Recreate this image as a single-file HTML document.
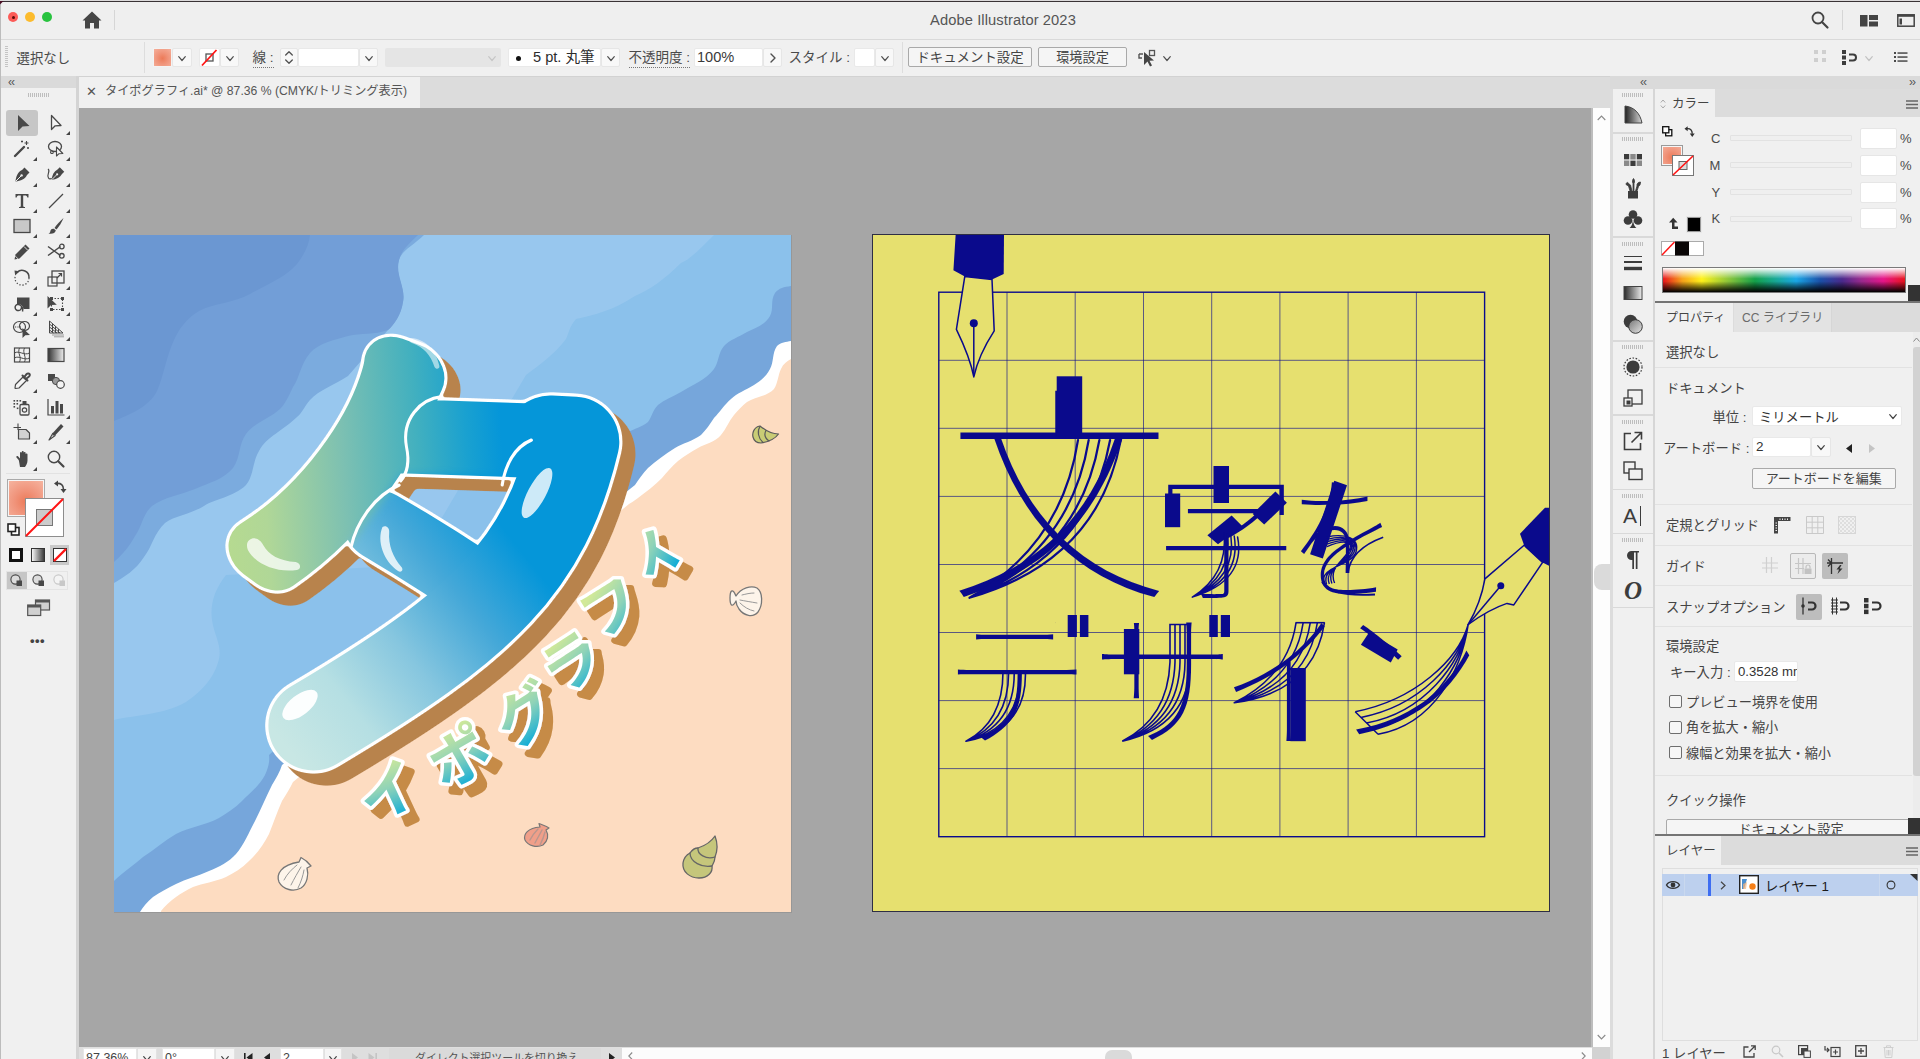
<!DOCTYPE html>
<html lang="ja">
<head>
<meta charset="utf-8">
<title>Adobe Illustrator 2023</title>
<style>
*{box-sizing:border-box;margin:0;padding:0}
html,body{width:1920px;height:1059px;overflow:hidden;background:#f0f0f0}
body{font-family:"Liberation Sans","Noto Sans CJK JP",sans-serif;font-size:12px;color:#464646;position:relative}
.abs{position:absolute}
#app{position:absolute;left:0;top:0;width:1920px;height:1059px;overflow:hidden;background:#f0f0f0}
.t{position:absolute;white-space:nowrap;line-height:1}
svg{position:absolute;overflow:visible}
/* title bar */
#titlebar{left:0;top:0;width:1920px;height:39px;background:#efefef}
#topline{left:0;top:0;width:1920px;height:2px;background:linear-gradient(#dcdadb 0 1px,#3a3336 1px 2px)}
#ctrlbar{left:0;top:39px;width:1920px;height:37px;background:#f0f0f0;border-top:1px solid #d9d9d9}
#tabbar{left:0;top:76px;width:1920px;height:32px;background:#dcdcdc;border-top:1px solid #d2d2d2}
#doctab{left:79px;top:77px;width:341px;height:31px;background:#f0f0f0}
#canvas{left:79px;top:108px;width:1513px;height:939px;background:#a6a6a6;overflow:hidden}
#tools{left:0;top:76px;width:79px;height:983px;background:#f0f0f0;border-right:3px solid #d4d4d4}
#toolshead{left:0;top:76px;width:76px;height:12px;background:#dadada}
#vscroll{left:1592px;top:108px;width:18px;height:939px;background:#fdfdfd}
#statusbar{left:79px;top:1047px;width:1531px;height:12px;background:#dedede}
#dock{left:1610px;top:76px;width:310px;height:983px;background:#dcdcdc}
#dockstrip{left:1613px;top:89px;width:40px;height:970px;background:#f0f0f0}
.fld{position:absolute;background:#fff;border:1px solid #e9e9e9;border-radius:2px}
.btn{position:absolute;background:#f8f8f8;border:1px solid #e6e6e6;border-radius:2px}
.pbtn{position:absolute;background:#f5f5f5;border:1px solid #a9a9a9;border-radius:2px;text-align:center}
.sep{position:absolute;background:#dcdcdc}
.panel{position:absolute;background:#f0f0f0}
.cb{position:absolute;width:13px;height:13px;border:1px solid #6e6e6e;border-radius:2px;background:#f6f6f6}
.grip{position:absolute;height:4px;background:repeating-linear-gradient(90deg,#bdbdbd 0 1px,transparent 1px 2px)}
</style>
</head>
<body>
<div id="app">
<!-- TITLEBAR -->
<div id="titlebar" class="abs"></div>
<div id="topline" class="abs"></div>
<div class="abs" style="left:7.8px;top:11.8px;width:10.4px;height:10.4px;border-radius:50%;background:#fc5b57"></div>
<div class="abs" style="left:11.5px;top:15.5px;width:3px;height:3px;border-radius:50%;background:#5a0b08"></div>
<div class="abs" style="left:25px;top:11.8px;width:10.4px;height:10.4px;border-radius:50%;background:#fcbb2d"></div>
<div class="abs" style="left:42px;top:11.8px;width:10.4px;height:10.4px;border-radius:50%;background:#28c33f"></div>
<svg style="left:82px;top:11px" width="20" height="18" viewBox="0 0 20 18"><path d="M10 0.5 L0.5 9.5 H3 V17.5 H8 V12 H12 V17.5 H17 V9.5 H19.5 Z" fill="#464646"/></svg>
<div class="sep" style="left:114px;top:10px;width:1px;height:20px;background:#d6d6d6"></div>
<div class="t" style="left:930px;top:13.2px;font-size:14.7px;color:#555;letter-spacing:0.1px">Adobe Illustrator 2023</div>
<svg style="left:1811px;top:11px" width="18" height="18" viewBox="0 0 18 18"><circle cx="7" cy="7" r="5.5" fill="none" stroke="#444" stroke-width="1.8"/><path d="M11 11 L16.5 16.5" stroke="#444" stroke-width="2.2" stroke-linecap="round"/></svg>
<div class="sep" style="left:1842px;top:10px;width:1px;height:20px;background:#d6d6d6"></div>
<svg style="left:1860px;top:15px" width="18" height="12" viewBox="0 0 18 12"><g fill="#444"><rect x="0" y="0" width="7.5" height="11.5"/><rect x="9" y="0" width="9" height="5"/><rect x="9" y="6.5" width="9" height="5"/></g></svg>
<svg style="left:1897px;top:14px" width="18" height="13" viewBox="0 0 18 13"><rect x="0.8" y="0.8" width="16.4" height="11.4" fill="none" stroke="#444" stroke-width="1.5"/><rect x="0.8" y="0.8" width="16.4" height="2" fill="#444"/><rect x="2.5" y="4.5" width="2.5" height="6" fill="#444"/></svg>

<!-- CONTROL BAR -->
<div id="ctrlbar" class="abs"></div>
<div class="abs" style="left:5px;top:46px;width:3px;height:22px;background:repeating-linear-gradient(180deg,#c4c4c4 0 1px,transparent 1px 2px)"></div>
<div class="t" style="left:16.5px;top:51.5px;font-size:13.4px;color:#4a4a4a;">選択なし</div>
<div class="sep" style="left:144px;top:42px;width:1px;height:31px;background:#dddddd"></div>
<div class="abs" style="left:153px;top:48px;width:19px;height:19px;background:radial-gradient(circle at 50% 55%,#ec7a58 0%,#f0947a 45%,#f5b09b 100%);border:1px solid #f3f3f3"></div>
<div class="btn" style="left:172px;top:48px;width:20px;height:19px"></div><svg style="left:178.0px;top:55.8px" width="8" height="5" viewBox="0 0 8 5"><path d="M0.7 0.7 L4.0 4.5 L7.3 0.7" fill="none" stroke="#505050" stroke-width="1.2" stroke-linecap="round" stroke-linejoin="round"/></svg>
<div class="fld" style="left:199px;top:48px;width:21px;height:19px"></div>
<svg style="left:199px;top:48px" width="21" height="19" viewBox="0 0 21 19"><rect x="7" y="6" width="7" height="7" fill="none" stroke="#555" stroke-width="1.3"/><path d="M3 17.5 L17.5 2" stroke="#ff1414" stroke-width="1.8"/></svg>
<div class="btn" style="left:220px;top:48px;width:19px;height:19px"></div><svg style="left:225.5px;top:55.8px" width="8" height="5" viewBox="0 0 8 5"><path d="M0.7 0.7 L4.0 4.5 L7.3 0.7" fill="none" stroke="#505050" stroke-width="1.2" stroke-linecap="round" stroke-linejoin="round"/></svg>
<div class="t" style="left:252.5px;top:51px;font-size:13.5px;color:#4a4a4a;border-bottom:1px dotted #777;padding-bottom:2px">線 :</div>
<div class="btn" style="left:280px;top:48px;width:18px;height:19px"></div>
<svg style="left:285px;top:51px" width="8" height="13" viewBox="0 0 8 13"><path d="M0.7 4 L4 0.8 L7.3 4 M0.7 9 L4 12.2 L7.3 9" fill="none" stroke="#505050" stroke-width="1.3" stroke-linecap="round" stroke-linejoin="round"/></svg>
<div class="fld" style="left:298px;top:48px;width:61px;height:19px"></div>
<div class="btn" style="left:359px;top:48px;width:19px;height:19px"></div><svg style="left:364.5px;top:55.8px" width="8" height="5" viewBox="0 0 8 5"><path d="M0.7 0.7 L4.0 4.5 L7.3 0.7" fill="none" stroke="#505050" stroke-width="1.2" stroke-linecap="round" stroke-linejoin="round"/></svg>
<div class="abs" style="left:385px;top:48px;width:116px;height:19px;background:#e5e5e5;border-radius:2px"></div>
<svg style="left:488.0px;top:55.8px" width="8" height="5" viewBox="0 0 8 5"><path d="M0.7 0.7 L4.0 4.5 L7.3 0.7" fill="none" stroke="#c6c6c6" stroke-width="1.2" stroke-linecap="round" stroke-linejoin="round"/></svg>
<div class="fld" style="left:508px;top:48px;width:93px;height:19px"></div>
<div class="abs" style="left:516px;top:56px;width:5px;height:5px;border-radius:50%;background:#111"></div>
<div class="t" style="left:533px;top:49.8px;font-size:14.6px;color:#2c2c2c;">5 pt. 丸筆</div>
<div class="btn" style="left:601px;top:48px;width:19px;height:19px"></div><svg style="left:606.5px;top:55.8px" width="8" height="5" viewBox="0 0 8 5"><path d="M0.7 0.7 L4.0 4.5 L7.3 0.7" fill="none" stroke="#505050" stroke-width="1.2" stroke-linecap="round" stroke-linejoin="round"/></svg>
<div class="t" style="left:628.5px;top:51px;font-size:13.5px;color:#4a4a4a;border-bottom:1px dotted #777;padding-bottom:2px">不透明度 :</div>
<div class="fld" style="left:694px;top:48px;width:69px;height:19px"></div>
<div class="t" style="left:697px;top:49.8px;font-size:14.6px;color:#3a3a3a;">100%</div>
<div class="btn" style="left:763px;top:48px;width:19px;height:19px"></div>
<svg style="left:770px;top:53px" width="6" height="10" viewBox="0 0 6 10"><path d="M1 1 L5 5 L1 9" fill="none" stroke="#505050" stroke-width="1.4" stroke-linecap="round" stroke-linejoin="round"/></svg>
<div class="t" style="left:788.5px;top:51px;font-size:13.5px;color:#4a4a4a;">スタイル :</div>
<div class="fld" style="left:854px;top:48px;width:21px;height:19px"></div>
<div class="btn" style="left:875px;top:48px;width:19px;height:19px"></div><svg style="left:880.5px;top:55.8px" width="8" height="5" viewBox="0 0 8 5"><path d="M0.7 0.7 L4.0 4.5 L7.3 0.7" fill="none" stroke="#505050" stroke-width="1.2" stroke-linecap="round" stroke-linejoin="round"/></svg>
<div class="sep" style="left:902px;top:42px;width:1px;height:31px;background:#dddddd"></div>
<div class="pbtn" style="left:908px;top:47px;width:124px;height:20px;font-size:13.4px;line-height:19.5px;color:#444">ドキュメント設定</div>
<div class="pbtn" style="left:1038px;top:47px;width:89px;height:20px;font-size:13.2px;line-height:19.5px;color:#444">環境設定</div>
<svg style="left:1138px;top:48px" width="20" height="20" viewBox="0 0 20 20"><path d="M1 6 H5 M1 6 V10 H4" fill="none" stroke="#555" stroke-width="1.4"/><rect x="11.5" y="2.5" width="5" height="5" fill="none" stroke="#555" stroke-width="1.3"/><path d="M6 4 L6 17 L9.5 13.5 L12 18.5 L14 17.5 L11.5 12.8 L16 12.5 Z" fill="#444"/></svg>
<svg style="left:1163.0px;top:55.8px" width="8" height="5" viewBox="0 0 8 5"><path d="M0.7 0.7 L4.0 4.5 L7.3 0.7" fill="none" stroke="#505050" stroke-width="1.2" stroke-linecap="round" stroke-linejoin="round"/></svg>
<svg style="left:1814px;top:50px" width="13" height="13" viewBox="0 0 13 13"><g fill="#cfcfcf"><rect x="0" y="0" width="4" height="4"/><rect x="8" y="0" width="4" height="4"/><rect x="0" y="8" width="4" height="4"/><rect x="8" y="8" width="4" height="4"/></g></svg>
<svg style="left:1842px;top:50px" width="16" height="15" viewBox="0 0 16 15"><g fill="#3c3c3c"><rect x="0" y="0" width="4" height="4"/><rect x="0" y="5.5" width="4" height="4"/><rect x="0" y="11" width="4" height="4"/></g><path d="M7 4.5 H11 A3 3 0 0 1 11 10.5 H7" fill="none" stroke="#3c3c3c" stroke-width="2"/></svg>
<svg style="left:1865.0px;top:55.8px" width="8" height="5" viewBox="0 0 8 5"><path d="M0.7 0.7 L4.0 4.5 L7.3 0.7" fill="none" stroke="#c2c2c2" stroke-width="1.2" stroke-linecap="round" stroke-linejoin="round"/></svg>
<svg style="left:1894px;top:52px" width="14" height="11" viewBox="0 0 14 11"><g fill="#4a4a4a"><rect x="0" y="0" width="2" height="2"/><rect x="0" y="4" width="2" height="2"/><rect x="0" y="8" width="2" height="2"/><rect x="3.5" y="0.3" width="10" height="1.5"/><rect x="3.5" y="4.3" width="10" height="1.5"/><rect x="3.5" y="8.3" width="10" height="1.5"/></g></svg>

<!-- TAB BAR -->
<div id="tabbar" class="abs"></div>
<div id="doctab" class="abs"></div>
<div class="t" style="left:86px;top:85px;font-size:13px;color:#555">✕</div>
<div class="t" style="left:105px;top:85px;font-size:12.2px;color:#555">タイポグラフィ.ai* @ 87.36 % (CMYK/トリミング表示)</div>
<!-- CANVAS -->
<div id="canvas" class="abs">
<div class="abs abshadow" style="left:35px;top:127px;width:678px;height:678px;background:#979797"></div>
<div class="abs" style="left:793.3px;top:126.3px;width:677.6px;height:677.6px;background:#2e2e44"></div>
<svg style="left:35px;top:127px" width="677" height="677" viewBox="0 0 677 677">
<defs>
<clipPath id="abL"><rect x="0" y="0" width="677" height="677"/></clipPath>
<linearGradient id="gTa" gradientUnits="userSpaceOnUse" x1="-181.2" y1="-197.7" x2="144.9" y2="-230.6">
<stop offset="0" stop-color="#b6da90"/><stop offset="0.12" stop-color="#b0d797"/><stop offset="0.35" stop-color="#7cc0b2"/><stop offset="0.56" stop-color="#42b0bf"/><stop offset="0.7" stop-color="#1aa1d0"/><stop offset="0.8" stop-color="#0596d9"/><stop offset="1" stop-color="#0596d9"/>
</linearGradient>
<linearGradient id="gTa2" gradientUnits="userSpaceOnUse" x1="-116.2" y1="43.7" x2="101.7" y2="-131.8">
<stop offset="0" stop-color="#c8e7e4"/><stop offset="0.25" stop-color="#b5dfe3"/><stop offset="0.5" stop-color="#86c6df"/><stop offset="0.75" stop-color="#45a8d8"/><stop offset="1" stop-color="#0596d9"/>
</linearGradient>
<linearGradient id="gSm" gradientUnits="objectBoundingBox" x1="0" y1="0" x2="0.6" y2="1">
<stop offset="0" stop-color="#c9e59a"/><stop offset="0.5" stop-color="#7fd0c0"/><stop offset="1" stop-color="#19b0d6"/>
</linearGradient>
</defs>
<g clip-path="url(#abL)">
<rect width="677" height="677" fill="#8bc1eb"/>
<!-- lighter central patch -->
<path d="M304 0 L600 0 C585 15 575 25 567 28 C550 45 535 55 521 61 C500 75 480 80 462 84 C455 92 455 98 452 104 C440 120 425 130 412 140 L300 330 L112 340 C100 355 96 370 98 385 C100 400 108 410 105 424 C100 445 85 458 72 467 C50 480 20 480 0 485 L0 0 Z" fill="#98c7ee"/>
<!-- band 3 -->
<path d="M0 0 H310 C300 10 288 15 285 25 C280 40 292 52 289 67 C287 80 280 90 274 95 L234 141 C220 150 205 155 196 165 C190 172 188 178 183 182 C170 195 152 202 145 216 C138 228 140 240 132 250 C120 262 100 264 90 271 C75 280 62 280 51 288 C40 298 38 312 30 322 C22 335 10 342 0 348 Z" fill="#7babde"/>
<!-- band 2 -->
<path d="M0 0 H304 C296 8 288 14 285 25 C281 40 292 52 289 67 C287 80 280 90 274 95 C260 100 247 98 234 101 C220 105 205 108 196 118 C186 130 186 142 179 152 C175 160 172 168 166 174 C155 184 140 188 132 199 C124 210 127 222 119 233 C110 244 95 248 81 254 C66 260 50 262 38 271 C28 280 28 292 21 301 C15 312 8 320 0 327 Z" fill="#729ed7"/>
<!-- band 1 -->
<path d="M0 0 H196 C195 10 190 20 183 29 C172 42 152 50 136 59 C120 68 100 68 85 76 C72 84 65 94 60 105 C52 122 50 140 43 156 C35 172 15 180 0 186 Z" fill="#6b97d2"/>
<!-- near-shore medium band -->
<path d="M677 51 C670 52 665 53 661 58 C656 66 660 74 656 81 C651 90 641 93 633 97 C625 102 615 105 610 111 C604 118 605 127 600 134 C592 145 578 150 567 157 C558 162 550 165 544 170 C538 176 538 182 534 187 C528 192 520 194 514 197 L155 520 C156 527 154 533 151 540 C146 550 136 558 128 566 C121 573 113 578 105 583 C92 590 76 592 62 599 C50 606 40 615 29 622 C20 630 8 638 0 646 L0 677 H60 L677 140 Z" fill="#76a6db"/>
<!-- sand with white foam stroke -->
<path d="M677 106 C672 107 667 107 663 111 C658 118 660 127 656 134 C652 142 646 146 640 150 C632 155 623 158 617 164 C610 170 606 177 600 183 C596 189 592 195 587 200 C579 206 569 208 561 213 C551 219 542 226 534 233 C529 238 525 244 521 250 L168 530 C166 537 162 543 158 550 C152 562 147 574 141 586 C135 597 130 610 122 619 C115 627 105 632 95 636 C84 641 72 644 62 649 C54 653 46 657 39 662 C33 667 29 672 26 677 H47 L677 677 Z" fill="#ffffff"/>
<path d="M677 124 C673 126 669 129 667 134 C664 140 664 148 660 154 C654 161 641 162 633 167 C628 171 624 175 620 180 C615 186 612 194 607 200 C601 207 591 209 584 213 C577 217 570 221 564 226 C558 231 553 237 548 243 C541 250 532 257 524 263 C520 266 517 268 515 269 L179 547 C176 553 172 560 168 566 C163 577 159 589 155 599 C150 609 143 619 135 626 C128 633 120 638 112 642 C101 647 89 648 79 652 C73 655 67 658 62 662 C56 666 51 671 47 676 V677 H677 Z" fill="#fddcc1"/>
<g stroke-linejoin="round" stroke-linecap="round">
<!-- shell 1 olive conch -->
<g transform="translate(638,190)" fill="#c9cc75" stroke="#5b5b5b" stroke-width="1.2">
<path d="M8 1 C2 2 0 8 1 12 C2 16 5 18 9 18 C15 17 23 14 26.5 9 C20 9 14 6 8 1 Z"/>
<path d="M8 1.5 C5 6 6 13 11 17.5" fill="none"/><path d="M14 5.5 C12 9 13 13 17 16" fill="none"/>
</g>
<!-- shell 2 white scallop -->
<g transform="translate(615,350)" fill="#fdf4ea" stroke="#777" stroke-width="1.3">
<path d="M7 11 C12 3 22 0 28 3 C34 7 34 20 29 27 C24 33 15 31 10 24 C8 21 7 18 7 16 C6 18 4 21 2.5 20 C0.5 18 0.5 8 2.5 6 C4.5 5 6 9 7 11 Z"/>
<path d="M13 10 C17 9 21 8 25 8 M11 15 C16 16 22 17 28 18 M11 18 C15 22 20 25 25 26" fill="none" stroke="#999" stroke-width="1"/>
</g>
<!-- shell 3 pink -->
<g transform="translate(410,588)" fill="#f09f89" stroke="#777" stroke-width="1.2">
<path d="M16 4 L15 0.5 C19 2 22 3 25 5 L22 7 C25 12 24 18 19 22 C13 25 4 23 1 17 C-1 11 4 5 16 4 Z"/>
<path d="M14 6 C11 9 8 13 6 17 M18 7 C16 11 13 16 11 20 M21 9 C20 13 18 18 16 22" fill="none" stroke="#b9978e" stroke-width="1.4"/>
</g>
<!-- shell 4 olive cone -->
<g transform="translate(568,601)" fill="#c5c67b" stroke="#666" stroke-width="1.3">
<path d="M33 0 C36 8 35 16 33 21 C33 25 31 28 30 30 C31 36 26 42 17 42 C8 42 0 36 1 27 C2 21 6 18 8 17 C10 14 13 12 16 12 C22 10 29 6 33 0 Z"/>
<path d="M16 12 C15 18 24 24 33 21 M8 17 C8 26 20 32 30 30" fill="none"/>
</g>
<!-- shell 5 white scallop -->
<g transform="translate(163,622)" fill="#fdf4ea" stroke="#777" stroke-width="1.3">
<path d="M22 5 L24 0.5 C27 2 31 5 34 9 L30 11 C32 18 30 27 24 31 C17 35 6 33 2 25 C-1 17 4 8 22 5 Z"/>
<path d="M20 8 C15 12 10 17 7 23 M24 10 C21 15 17 22 14 28 M27 13 C26 19 24 25 21 31" fill="none" stroke="#999" stroke-width="1"/>
</g>
</g>

<defs>
<filter id="blurM" x="-10%" y="-10%" width="120%" height="120%"><feGaussianBlur stdDeviation="5"/></filter>
<mask id="mLow" maskUnits="userSpaceOnUse" x="0" y="0" width="700" height="700"><path d="M-20 420 L100 420 L151 408 L217 382 L246 326 L303 250 L402 252 L488 165 L700 165 L700 700 L-20 700 Z" fill="#fff" filter="url(#blurM)" transform="translate(-5,0)"/></mask>
<clipPath id="keepTa"><path d="M-50 -50 L730 -50 L730 262 L440 262 L402 310 L365 347 L340 382 L309 360 L290 358 L250 366 L204 386 L150 420 L-50 440 Z" transform="translate(-5,0)"/></clipPath>
<linearGradient id="gTa2ab" gradientUnits="userSpaceOnUse" x1="190" y1="535" x2="430" y2="345">
<stop offset="0" stop-color="#c8e7e4"/><stop offset="0.25" stop-color="#b5dfe3"/><stop offset="0.5" stop-color="#86c6df"/><stop offset="0.75" stop-color="#45a8d8"/><stop offset="1" stop-color="#0596d9"/>
</linearGradient>
<linearGradient id="gTaAB" gradientUnits="userSpaceOnUse" x1="118" y1="262" x2="470" y2="237">
<stop offset="0" stop-color="#b6da90"/><stop offset="0.12" stop-color="#b0d797"/><stop offset="0.35" stop-color="#7cc0b2"/><stop offset="0.56" stop-color="#42b0bf"/><stop offset="0.7" stop-color="#1aa1d0"/><stop offset="0.8" stop-color="#0596d9"/><stop offset="1" stop-color="#0596d9"/>
</linearGradient>
<pattern id="pTa" patternUnits="userSpaceOnUse" x="-10" y="-10" width="720" height="720" patternTransform="matrix(0.872830 -0.030885 -0.099965 0.889032 -246.0778 -425.1853)">
<rect x="-10" y="-10" width="720" height="720" fill="url(#gTaAB)"/>
<rect x="-10" y="-10" width="720" height="720" fill="url(#gTa2ab)" mask="url(#mLow)"/>
</pattern>
<filter id="fxTa" filterUnits="userSpaceOnUse" x="60" y="40" width="520" height="560" color-interpolation-filters="sRGB">
<feGaussianBlur in="SourceAlpha" stdDeviation="2.6" result="bl"/>
<feComponentTransfer in="bl" result="d"><feFuncA type="linear" slope="14" intercept="-0.9"/></feComponentTransfer>
<feFlood flood-color="#ffffff"/><feComposite in2="d" operator="in" result="w"/>
<feOffset in="d" dx="13" dy="12" result="o"/>
<feFlood flood-color="#b8834c"/><feComposite in2="o" operator="in" result="b"/>
<feMerge><feMergeNode in="b"/><feMergeNode in="w"/><feMergeNode in="SourceGraphic"/></feMerge>
</filter>
</defs>
<g id="taG" stroke-linejoin="round" stroke-linecap="round" fill="none">
<g filter="url(#fxTa)">
<g clip-path="url(#keepTa)"><text font-family="'Noto Sans CJK JP',sans-serif" font-weight="100" font-size="400" text-anchor="middle" x="0" y="0" fill="url(#pTa)" stroke="url(#pTa)" stroke-width="54" transform="translate(0,309) skewX(8.5) translate(0,-309) translate(311,490) rotate(2) scale(1.145,1.13)">タ</text></g>
<path d="M436 205.5 L460.3 206.7 C430.6 330.8 369.7 389.5 199.4 490.5" stroke="url(#gTa2ab)" stroke-width="90"/>
</g>
<!-- inner white lines -->
<g stroke="#fff" stroke-width="3" fill="none" transform="translate(0,309) skewX(8.5) translate(0,-309) translate(-5,0)">
<path d="M438 205 C420 212 408 230 402 250"/>
<path d="M355 161.5 C333 164 311 184 312 212 C313 228 308 239 301 246"/>
<path d="M299 250 C270 262 250 290 242 311"/>
</g>
<!-- highlights -->
<g fill="#fff" stroke="none" transform="translate(0,309) skewX(8.5) translate(0,-309) translate(-5,0)">
<path d="M333 103 C346 104 356 114 357 131 C357 134 353 135 352 132 C350 120 344 112 333 108 C330 107 330 103 333 103 Z" opacity="0.55"/>
<path d="M141 305 C146 301 152 304 154 310 C158 320 168 326 184 327 C189 328 189 334 184 335 C164 338 144 330 138 315 C137 311 138 307 141 305 Z" opacity="0.75"/>
<path d="M276 292 C280 290 283 293 282 297 C279 310 282 322 289 332 C291 335 288 338 285 336 C272 326 268 306 276 292 Z" opacity="0.8"/>
</g>
<g fill="#fff" stroke="none">
<ellipse cx="423" cy="258" rx="9" ry="28" transform="rotate(28 423 258)" opacity="0.8"/>
<ellipse cx="186" cy="470" rx="21" ry="10" transform="rotate(-38 186 470)" opacity="0.95"/>
</g>
</g>

<defs>
<radialGradient id="gSm3" gradientUnits="userSpaceOnUse" cx="110" cy="109" r="512"><stop offset="0.868" stop-color="#d2e998"/><stop offset="0.925" stop-color="#8fd3b8"/><stop offset="0.985" stop-color="#10acd8"/><stop offset="1" stop-color="#10acd8"/></radialGradient>
<filter id="shSm" filterUnits="userSpaceOnUse" x="200" y="250" width="450" height="400"><feOffset in="SourceAlpha" dx="10" dy="9" result="o"/><feFlood flood-color="#c68b46"/><feComposite in2="o" operator="in" result="s"/><feMerge><feMergeNode in="s"/><feMergeNode in="SourceGraphic"/></feMerge></filter>
</defs>
<g filter="url(#shSm)"><text font-family="'Noto Sans CJK JP',sans-serif" font-weight="700" font-size="60" x="256.7 330.5 397.7 444.3 482.7 543.2" y="588.7 556.2 514.7 462.0 406.7 353.5" rotate="-25 -30 -32 -33 -32 -60" fill="url(#gSm3)" stroke="#fff" stroke-width="7" stroke-linejoin="round" paint-order="stroke">イポグラフィ</text></g>

</g>
</svg>

<svg style="left:794px;top:127px" width="676" height="676" viewBox="873 235 676 676">
<defs><clipPath id="abR"><rect x="873" y="235" width="676" height="676"/></clipPath><clipPath id="cDe"><path d="M900 560H1056V646H1100V800H900Z"/></clipPath><clipPath id="cZa"><path d="M1095 560H1199V646H1240V800H1095Z"/></clipPath></defs>
<g clip-path="url(#abR)">
<rect x="873" y="235" width="676" height="676" fill="#e6e06f"/>
<path d="M1007.0 292.2V836.7M938.8 360.3H1484.6M1075.2 292.2V836.7M938.8 428.3H1484.6M1143.5 292.2V836.7M938.8 496.4H1484.6M1211.7 292.2V836.7M938.8 564.5H1484.6M1279.9 292.2V836.7M938.8 632.5H1484.6M1348.1 292.2V836.7M938.8 700.6H1484.6M1416.4 292.2V836.7M938.8 768.6H1484.6" stroke="#0a0a8c" stroke-width="0.8" fill="none" opacity="0.8"/>
<rect x="938.8" y="292.2" width="545.8" height="544.5" fill="none" stroke="#0a0a8c" stroke-width="1.4"/>
<g font-family="'Noto Sans CJK JP',sans-serif" font-weight="100" font-size="100" fill="#0a0a8c">
<text transform="matrix(2.2198 0 0 2.2826 947.90 580.74)" x="0" y="0">文</text><text transform="matrix(1.4186 0 0 1.4505 1155.07 587.85)" x="0" y="0">字</text><text transform="matrix(1.0921 0 0 1.3735 1287.99 589.51)" x="0" y="0">を</text><g clip-path="url(#cDe)"><text transform="matrix(1.4886 0 0 1.4157 943.60 735.34)" x="0" y="0">デ</text></g><g clip-path="url(#cZa)"><text transform="matrix(1.4494 0 0 1.4824 1093.75 732.11)" x="0" y="0">ザ</text></g><text transform="matrix(1.2466 0 0 1.5256 1220.29 737.95)" x="0" y="0">イ</text><text transform="matrix(1.5333 0 0 1.5493 1330.47 734.00)" x="0" y="0">ン</text>
</g>
<rect x="1056.7" y="376.3" width="25.5" height="59.7" fill="#0a0a8c"/>
<path d="M1078.0 440.0Q1062.0 545.0 969.5 597.8M1088.7 440.0Q1071.0 549.0 969.5 597.8M1099.4 440.0Q1080.0 553.0 969.5 597.8M1110.1 440.0Q1089.0 557.0 969.5 597.8M1120.8 440.0Q1098.0 561.0 969.5 597.8" fill="none" stroke="#0a0a8c" stroke-width="2.2" stroke-linecap="round"/>
<rect x="1213.5" y="466.0" width="15.5" height="37.0" fill="#0a0a8c"/>
<rect x="1165.0" y="493.5" width="15.2" height="33.7" fill="#0a0a8c"/>
<polygon points="1252.7,514.0 1275.4,491.4 1286.9,502.8 1264.2,524.6" fill="#0a0a8c"/>
<polygon points="1207.4,535.2 1231.6,515.5 1242.1,526.1 1218.0,544.2" fill="#0a0a8c"/>
<path d="M1224.0 533.0Q1228.0 575.0 1192.3 597.1M1227.4 534.0Q1232.5 576.5 1192.3 597.1M1230.8 535.0Q1237.0 578.0 1192.3 597.1M1234.2 536.0Q1241.5 579.5 1192.3 597.1M1237.6 537.0Q1246.0 581.0 1192.3 597.1" fill="none" stroke="#0a0a8c" stroke-width="1.5" stroke-linecap="round"/>
<polygon points="1334.3,480.8 1347.0,485.3 1322.8,558.4 1310.1,554.2" fill="#0a0a8c"/>
<path d="M1327.0 537.0 C1345.0 533.0 1360.0 538.0 1356.0 552.0 S1318.0 566.0 1324.0 585.0M1327.0 539.4 C1345.0 534.4 1358.8 539.0 1354.1 552.0 S1320.6 566.7 1326.6 584.5M1327.0 541.8 C1345.0 535.9 1357.6 539.9 1352.2 552.0 S1323.3 567.4 1329.3 584.0M1327.0 544.2 C1345.0 537.3 1356.4 540.9 1350.2 552.0 S1325.9 568.2 1331.9 583.6M1327.0 546.6 C1345.0 538.8 1355.2 541.8 1348.3 552.0 S1328.6 568.9 1334.6 583.1" fill="none" stroke="#0a0a8c" stroke-width="1.4"/>
<path d="M1383.2 537.3 C1365 544 1350 555 1348 573" fill="none" stroke="#0a0a8c" stroke-width="1.6"/>
<path d="M1322 582 C1330 594 1352 596 1375 594.5" fill="none" stroke="#0a0a8c" stroke-width="1.8"/>
<path d="M1003.0 672.0Q1003.0 722.0 966.0 741.2M1008.6 672.0Q1009.0 724.0 966.0 741.2M1014.2 672.0Q1015.0 726.0 966.0 741.2M1019.8 672.0Q1021.0 728.0 966.0 741.2M1025.4 672.0Q1027.0 730.0 966.0 741.2" fill="none" stroke="#0a0a8c" stroke-width="1.6" stroke-linecap="round"/>
<rect x="1067.7" y="615.0" width="9.2" height="22.0" fill="#0a0a8c"/>
<rect x="1079.9" y="615.0" width="8.5" height="22.0" fill="#0a0a8c"/>
<rect x="1123.9" y="629.0" width="15.4" height="45.3" fill="#0a0a8c"/>
<path d="M1170.0 624.5V662Q1168.0 718.0 1122.2 741.2M1175.0 624.5V662Q1173.5 720.0 1122.2 741.2M1180.0 624.5V662Q1179.0 722.0 1122.2 741.2M1185.0 624.5V662Q1184.5 724.0 1122.2 741.2M1190.0 624.5V662Q1190.0 726.0 1122.2 741.2 M1169.2 624.5H1190.5" fill="none" stroke="#0a0a8c" stroke-width="1.6"/>
<rect x="1209.3" y="615.0" width="8.5" height="22.0" fill="#0a0a8c"/>
<rect x="1220.8" y="615.0" width="9.2" height="22.0" fill="#0a0a8c"/>
<path d="M1296.0 623.0Q1288.0 676.0 1234.3 702.7M1303.1 623.0Q1294.5 680.0 1234.3 702.7M1310.2 623.0Q1301.0 684.0 1234.3 702.7M1317.3 623.0Q1307.5 688.0 1234.3 702.7M1324.4 623.0Q1314.0 692.0 1234.3 702.7" fill="none" stroke="#0a0a8c" stroke-width="1.6" stroke-linecap="round"/>
<path d="M1295.6 622.7H1324.6" stroke="#0a0a8c" stroke-width="1.6"/>
<rect x="1290.4" y="668.0" width="15.4" height="73.2" fill="#0a0a8c"/>
<polygon points="1369.0,632.4 1397.7,649.6 1390.8,662.6 1360.9,644.7" fill="#0a0a8c"/>
<path d="M1468.2 624.5 C1458.0 660.0 1415.0 700.0 1355.2 711.7M1468.2 624.5 C1459.0 662.0 1420.0 706.0 1360.9 717.4M1468.2 624.5 C1460.0 664.0 1425.0 712.0 1366.6 723.0M1468.2 624.5 C1461.0 666.0 1430.0 718.0 1372.3 728.7M1468.2 624.5 C1462.0 668.0 1435.0 724.0 1378.0 734.3 M1355.2 711.7L1378.1 734.3" fill="none" stroke="#0a0a8c" stroke-width="1.5"/>
<path d="M964.8 276.4 L956.4 329.3 C964 345 971 362 973.8 376.9 C977 362 985 345 994.2 330.8 L992 279.4 Z" fill="#e6e06f" stroke="#0a0a8c" stroke-width="1.5" stroke-linejoin="round"/>
<polygon points="955.7,234.3 1004.0,234.3 1003.7,274.0 992.0,279.4 964.8,276.4 953.4,270.3" fill="#0a0a8c"/>
<circle cx="973.8" cy="323.2" r="4" fill="#0a0a8c"/><path d="M973.8 323V376" stroke="#0a0a8c" stroke-width="1.5"/>
<path d="M1524.1 545.2 L1484.9 578.9 C1482 596 1476 611 1468.2 624.5 C1480 616 1493 608 1507 603.4 L1513.8 604.9 L1542.6 562.4 Z" fill="#e6e06f" stroke="#0a0a8c" stroke-width="1.5" stroke-linejoin="round"/>
<polygon points="1545.0,507.7 1549.5,507.7 1549.5,566.1 1542.6,562.4 1524.1,545.2 1520.0,533.7" fill="#0a0a8c"/>
<circle cx="1500.8" cy="585.8" r="3.5" fill="#0a0a8c"/><path d="M1500.8 585.8L1468.2 624.5" stroke="#0a0a8c" stroke-width="1.5"/>

</g></svg>

</div>
<div id="vscroll" class="abs"></div>
<div class="abs" style="left:1591px;top:108px;width:1.5px;height:939px;background:#bdbdbd"></div>
<div class="abs" style="left:1609.5px;top:76px;width:3.5px;height:983px;background:#d6d6d6"></div>
<svg style="left:1597px;top:114.5px" width="9" height="6" viewBox="0 0 9 6"><path d="M0.7 5 L4.5 1 L8.3 5" fill="none" stroke="#8a8a8a" stroke-width="1.1"/></svg>
<svg style="left:1597px;top:1034px" width="9" height="6" viewBox="0 0 9 6"><path d="M0.7 1 L4.5 5 L8.3 1" fill="none" stroke="#8a8a8a" stroke-width="1.1"/></svg>
<div class="abs" style="left:1594px;top:564px;width:15.5px;height:26px;background:#dadada;border-radius:8px 0 0 8px"></div>

<!-- TOOLS -->
<div id="tools" class="abs"></div>
<div id="toolshead" class="abs"></div>
<div class="abs" style="left:6px;top:110px;width:32px;height:26px;background:#c6c6c6;border-radius:3px"></div>
<div class="grip" style="left:28px;top:93px;width:21px;height:4px"></div>
<div class="t" style="left:8px;top:76px;font-size:12px;color:#555;letter-spacing:-1px">‹‹</div>
<svg style="left:12.0px;top:112.7px" width="20" height="20" viewBox="0 0 20 20"><path d="M5 2 L5 18 L9.5 13.5 L16.5 13 Z" fill="#484848" transform="translate(1,0)"/></svg>
<svg style="left:45.5px;top:112.7px" width="20" height="20" viewBox="0 0 20 20"><path d="M5.5 2.5 L5.5 16.5 L9.2 12.8 L15 12.5 Z" fill="#f4f4f4" stroke="#484848" stroke-width="1.3" stroke-linejoin="round"/></svg>
<svg style="left:66.0px;top:130.7px" width="4" height="4" viewBox="0 0 4 4"><path d="M4 0V4H0Z" fill="#444"/></svg>
<svg style="left:12.0px;top:139.0px" width="20" height="20" viewBox="0 0 20 20"><path d="M3 17 L12 8" stroke="#484848" stroke-width="2.4" stroke-linecap="round"/><path d="M14.5 2 V6 M12.5 4 H16.5 M10 1.5 V3.5 M9 2.5 H11 M16 8 V10 M15 9 H17" stroke="#484848" stroke-width="1.1"/></svg>
<svg style="left:32.5px;top:157.0px" width="4" height="4" viewBox="0 0 4 4"><path d="M4 0V4H0Z" fill="#444"/></svg>
<svg style="left:45.5px;top:139.0px" width="20" height="20" viewBox="0 0 20 20"><ellipse cx="9" cy="7.5" rx="6.5" ry="5" fill="none" stroke="#484848" stroke-width="1.3"/><path d="M6 11.5 C4 12 4 15 6.5 14.5 C8 14 7 12 6 12" fill="none" stroke="#484848" stroke-width="1.1"/><path d="M10.5 8 L10.5 17 L13 14.7 L16.8 14.5 Z" fill="#f4f4f4" stroke="#484848" stroke-width="1.1" stroke-linejoin="round"/></svg>
<svg style="left:66.0px;top:157.0px" width="4" height="4" viewBox="0 0 4 4"><path d="M4 0V4H0Z" fill="#444"/></svg>
<svg style="left:12.0px;top:165.0px" width="20" height="20" viewBox="0 0 20 20"><path d="M12.5 2.5 L17.5 7.5 L15 10 C13 14 9 16 3.5 16.5 C4 11 6 7 10 5 Z" fill="#484848"/><path d="M3.8 16.2 L9 11" stroke="#f0f0f0" stroke-width="1"/><circle cx="9.6" cy="10.4" r="1.2" fill="#f0f0f0"/></svg>
<svg style="left:32.5px;top:183.0px" width="4" height="4" viewBox="0 0 4 4"><path d="M4 0V4H0Z" fill="#444"/></svg>
<svg style="left:45.5px;top:165.0px" width="20" height="20" viewBox="0 0 20 20"><g transform="translate(2.5,0) scale(0.9)"><path d="M12.5 2.5 L17.5 7.5 L15 10 C13 14 9 16 3.5 16.5 C4 11 6 7 10 5 Z" fill="#484848"/><path d="M3.8 16.2 L9 11" stroke="#f0f0f0" stroke-width="1"/><circle cx="9.6" cy="10.4" r="1.2" fill="#f0f0f0"/></g><path d="M2 4 C5 6 0 10 2.5 13 C3.5 14.5 5 14 5.5 13" fill="none" stroke="#484848" stroke-width="1.2"/></svg>
<svg style="left:66.0px;top:183.0px" width="4" height="4" viewBox="0 0 4 4"><path d="M4 0V4H0Z" fill="#444"/></svg>
<svg style="left:12.0px;top:190.6px" width="20" height="20" viewBox="0 0 20 20"><path d="M3.5 3 H16.5 V6.5 H15.3 C15 5 14.5 4.6 13 4.6 H11.2 V15 C11.2 15.8 11.8 16 13 16 V17 H7 V16 C8.2 16 8.8 15.8 8.8 15 V4.6 H7 C5.5 4.6 5 5 4.7 6.5 H3.5 Z" fill="#484848"/></svg>
<svg style="left:32.5px;top:208.6px" width="4" height="4" viewBox="0 0 4 4"><path d="M4 0V4H0Z" fill="#444"/></svg>
<svg style="left:45.5px;top:190.6px" width="20" height="20" viewBox="0 0 20 20"><path d="M3 17 L17 3" stroke="#484848" stroke-width="1.3"/></svg>
<svg style="left:66.0px;top:208.6px" width="4" height="4" viewBox="0 0 4 4"><path d="M4 0V4H0Z" fill="#444"/></svg>
<svg style="left:12.0px;top:216.0px" width="20" height="20" viewBox="0 0 20 20"><rect x="2" y="3.5" width="16" height="13" fill="#c8c8c8" stroke="#484848" stroke-width="1.3"/></svg>
<svg style="left:32.5px;top:234.0px" width="4" height="4" viewBox="0 0 4 4"><path d="M4 0V4H0Z" fill="#444"/></svg>
<svg style="left:45.5px;top:216.0px" width="20" height="20" viewBox="0 0 20 20"><path d="M17.5 2 C14 5 10.5 9 8.5 12 L10.5 13.5 C13 10.5 16 6 17.5 2 Z" fill="#484848"/><path d="M7.8 12.8 C5.5 12.5 4.5 14 4.3 15.5 C4.1 16.8 3.2 17.3 2.5 17.5 C5.5 18.3 9.5 17.5 9.8 14.3 Z" fill="#484848"/></svg>
<svg style="left:66.0px;top:234.0px" width="4" height="4" viewBox="0 0 4 4"><path d="M4 0V4H0Z" fill="#444"/></svg>
<svg style="left:12.0px;top:241.6px" width="20" height="20" viewBox="0 0 20 20"><path d="M13.5 2.5 L17.5 6.5 L7.5 16.5 L2.5 17.5 L3.5 12.5 Z" fill="#484848"/><path d="M12 4.5 L15.5 8" stroke="#f0f0f0" stroke-width="0.9"/><path d="M3.2 14 L6 16.8" stroke="#f0f0f0" stroke-width="0.8"/></svg>
<svg style="left:32.5px;top:259.6px" width="4" height="4" viewBox="0 0 4 4"><path d="M4 0V4H0Z" fill="#444"/></svg>
<svg style="left:45.5px;top:241.6px" width="20" height="20" viewBox="0 0 20 20"><path d="M2 4.5 L14.5 13.5 M2 13.5 L14.5 4.5" stroke="#484848" stroke-width="1.5"/><circle cx="15.8" cy="4.5" r="2.3" fill="none" stroke="#484848" stroke-width="1.3"/><circle cx="15.8" cy="13.8" r="2.3" fill="none" stroke="#484848" stroke-width="1.3"/></svg>
<svg style="left:66.0px;top:259.6px" width="4" height="4" viewBox="0 0 4 4"><path d="M4 0V4H0Z" fill="#444"/></svg>
<svg style="left:12.0px;top:267.7px" width="20" height="20" viewBox="0 0 20 20"><path d="M5 4.5 A7 7 0 0 1 17 10" fill="none" stroke="#484848" stroke-width="1.5"/><path d="M17 10 A7 7 0 1 1 3.5 7.5" fill="none" stroke="#484848" stroke-width="1.2" stroke-dasharray="1.3 1.8"/><path d="M2.5 2.5 L7.5 3.2 L3.2 7.5 Z" fill="#484848"/></svg>
<svg style="left:32.5px;top:285.7px" width="4" height="4" viewBox="0 0 4 4"><path d="M4 0V4H0Z" fill="#444"/></svg>
<svg style="left:45.5px;top:267.7px" width="20" height="20" viewBox="0 0 20 20"><rect x="2" y="9" width="9" height="9" fill="none" stroke="#484848" stroke-width="1.2"/><rect x="6" y="3" width="12" height="12" fill="none" stroke="#484848" stroke-width="1.3"/><path d="M11 10 L15.5 5.5 M12.5 5.5 H15.5 V8.5" fill="none" stroke="#484848" stroke-width="1.2"/></svg>
<svg style="left:66.0px;top:285.7px" width="4" height="4" viewBox="0 0 4 4"><path d="M4 0V4H0Z" fill="#444"/></svg>
<svg style="left:12.0px;top:293.5px" width="20" height="20" viewBox="0 0 20 20"><path d="M5 3.5 H17.5 V15 H11.5 C11 11 8 9.5 5 10 Z" fill="#484848"/><path d="M9.5 13 A3.2 3.2 0 1 1 6 10.2 A5.5 5.5 0 0 1 10.5 17.5" fill="none" stroke="#484848" stroke-width="1.5"/></svg>
<svg style="left:32.5px;top:311.5px" width="4" height="4" viewBox="0 0 4 4"><path d="M4 0V4H0Z" fill="#444"/></svg>
<svg style="left:45.5px;top:293.5px" width="20" height="20" viewBox="0 0 20 20"><rect x="5.5" y="4.5" width="11" height="11" fill="none" stroke="#484848" stroke-width="1.1" stroke-dasharray="1.5 1.5"/><g fill="#484848"><rect x="4" y="3" width="3" height="3"/><rect x="15" y="3" width="3" height="3"/><rect x="4" y="14" width="3" height="3"/><rect x="15" y="14" width="3" height="3"/></g><path d="M1.5 2 L1.5 14.5 L5 11 L10.8 10.7 Z" fill="#484848"/></svg>
<svg style="left:66.0px;top:311.5px" width="4" height="4" viewBox="0 0 4 4"><path d="M4 0V4H0Z" fill="#444"/></svg>
<svg style="left:12.0px;top:319.0px" width="20" height="20" viewBox="0 0 20 20"><ellipse cx="7.5" cy="8" rx="6" ry="5.5" fill="none" stroke="#484848" stroke-width="1.2"/><ellipse cx="12.5" cy="7" rx="5" ry="4.5" fill="none" stroke="#484848" stroke-width="1.2"/><path d="M3 8 H10" stroke="#484848" stroke-width="1" stroke-dasharray="1.2 1.2"/><path d="M10.5 9 L10.5 19 L13.3 16.3 L18 16 Z" fill="#484848"/></svg>
<svg style="left:32.5px;top:337.0px" width="4" height="4" viewBox="0 0 4 4"><path d="M4 0V4H0Z" fill="#444"/></svg>
<svg style="left:45.5px;top:319.0px" width="20" height="20" viewBox="0 0 20 20"><path d="M3.5 2 V14 H17 M3.5 2 L17 14 M3.5 5 L14 14 M3.5 8 L11 14 M3.5 11 L7.5 14 M6.5 4.6 V14 M9.5 7.3 V14 M12.5 10 V14" fill="none" stroke="#484848" stroke-width="1"/><path d="M6 16 H18 M8 17.8 H18" stroke="#9a9a9a" stroke-width="1"/></svg>
<svg style="left:66.0px;top:337.0px" width="4" height="4" viewBox="0 0 4 4"><path d="M4 0V4H0Z" fill="#444"/></svg>
<svg style="left:12.0px;top:345.0px" width="20" height="20" viewBox="0 0 20 20"><rect x="2.5" y="3" width="15" height="14" fill="none" stroke="#484848" stroke-width="1.2"/><path d="M2.5 8 C7 5 12 11 17.5 8 M2.5 13 C7 10 12 16 17.5 13 M7.5 3 C5 8 10 12 7.5 17 M12.5 3 C10 8 15 12 12.5 17" fill="none" stroke="#484848" stroke-width="1"/></svg>
<svg style="left:45.5px;top:345.0px" width="20" height="20" viewBox="0 0 20 20"><defs><linearGradient id="tg1" x1="0" x2="1" y1="0" y2="0"><stop offset="0" stop-color="#333"/><stop offset="1" stop-color="#eee"/></linearGradient></defs><rect x="2" y="3.5" width="16" height="13" fill="url(#tg1)" stroke="#484848" stroke-width="1.2"/></svg>
<svg style="left:12.0px;top:371.2px" width="20" height="20" viewBox="0 0 20 20"><path d="M11 6 L14.5 9.5 L7 17 L3.5 17.5 L3 17 L3.5 13.5 Z" fill="#f4f4f4" stroke="#484848" stroke-width="1.2" stroke-linejoin="round"/><path d="M10.5 4.5 L15.5 9.5 M12 6.5 L14.5 3.2 C15.5 2 17.5 2.2 17.8 3.5 C18 4.5 17.5 5.2 16.8 5.7 L13.8 8" stroke="#484848" stroke-width="2" fill="none" stroke-linecap="round"/></svg>
<svg style="left:32.5px;top:389.2px" width="4" height="4" viewBox="0 0 4 4"><path d="M4 0V4H0Z" fill="#444"/></svg>
<svg style="left:45.5px;top:371.2px" width="20" height="20" viewBox="0 0 20 20"><rect x="2" y="3" width="7" height="7" fill="#484848"/><circle cx="10" cy="10" r="3.6" fill="#9a9a9a" stroke="#484848" stroke-width="1"/><circle cx="14.5" cy="13.5" r="3.8" fill="#f4f4f4" stroke="#484848" stroke-width="1.2"/></svg>
<svg style="left:12.0px;top:396.7px" width="20" height="20" viewBox="0 0 20 20"><rect x="8" y="7.5" width="9" height="10.5" rx="1.2" fill="none" stroke="#484848" stroke-width="1.3"/><rect x="10.5" y="4" width="4" height="3.5" fill="#484848"/><circle cx="12.5" cy="13" r="2.2" fill="none" stroke="#484848" stroke-width="1.2"/><g fill="#484848"><rect x="1.5" y="3" width="1.6" height="1.6"/><rect x="4.5" y="3" width="1.6" height="1.6"/><rect x="7.5" y="3" width="1.6" height="1.6"/><rect x="1.5" y="6" width="1.6" height="1.6"/><rect x="4.5" y="6" width="1.6" height="1.6"/><rect x="1.5" y="9" width="1.6" height="1.6"/><rect x="4.8" y="10.5" width="1.6" height="1.6"/></g></svg>
<svg style="left:32.5px;top:414.7px" width="4" height="4" viewBox="0 0 4 4"><path d="M4 0V4H0Z" fill="#444"/></svg>
<svg style="left:45.5px;top:396.7px" width="20" height="20" viewBox="0 0 20 20"><path d="M2 2 V18 H18.5" fill="none" stroke="#484848" stroke-width="1.2"/><g fill="#484848"><rect x="5" y="9" width="3" height="7.5"/><rect x="9.5" y="4" width="3" height="12.5"/><rect x="14" y="7" width="3" height="9.5"/></g></svg>
<svg style="left:66.0px;top:414.7px" width="4" height="4" viewBox="0 0 4 4"><path d="M4 0V4H0Z" fill="#444"/></svg>
<svg style="left:12.0px;top:422.2px" width="20" height="20" viewBox="0 0 20 20"><path d="M6 1.5 V8 M1.5 5.5 H9" stroke="#484848" stroke-width="1.1"/><path d="M6.5 7.5 H14 L17.5 11 V17 H6.5 Z" fill="#d2d2d2" stroke="#484848" stroke-width="1.2" stroke-linejoin="round"/></svg>
<svg style="left:32.5px;top:440.2px" width="4" height="4" viewBox="0 0 4 4"><path d="M4 0V4H0Z" fill="#444"/></svg>
<svg style="left:45.5px;top:422.2px" width="20" height="20" viewBox="0 0 20 20"><path d="M15 2 L17.5 4.5 L9.5 13 L6.5 13.8 L7 10.8 Z" fill="#484848"/><path d="M7 11 L3 18 L9.5 13.3" fill="none" stroke="#484848" stroke-width="1.2" stroke-linejoin="round"/></svg>
<svg style="left:66.0px;top:440.2px" width="4" height="4" viewBox="0 0 4 4"><path d="M4 0V4H0Z" fill="#444"/></svg>
<svg style="left:12.0px;top:448.6px" width="20" height="20" viewBox="0 0 20 20"><path d="M5.2 10.5 L3 8 C2.2 7 3.5 5.8 4.5 6.8 L6.5 9 V3.5 C6.5 2.3 8.3 2.3 8.3 3.5 V2.5 C8.3 1.3 10.2 1.3 10.2 2.5 V3.3 C10.2 2.1 12.1 2.1 12.1 3.3 V4.8 C12.1 3.7 14 3.7 14 4.9 V11 C14 14 12.5 16 11.5 17.5 H6.5 C6 15 5.8 12 5.2 10.5 Z" fill="#484848" transform="translate(1.5,0.5)"/></svg>
<svg style="left:32.5px;top:466.6px" width="4" height="4" viewBox="0 0 4 4"><path d="M4 0V4H0Z" fill="#444"/></svg>
<svg style="left:45.5px;top:448.6px" width="20" height="20" viewBox="0 0 20 20"><circle cx="8" cy="8" r="5.7" fill="none" stroke="#484848" stroke-width="1.4"/><path d="M12.2 12.2 L17.5 17.5" stroke="#484848" stroke-width="2.2" stroke-linecap="round"/></svg>
<div class="sep" style="left:6px;top:473px;width:64px;height:1px;background:#e2e2e2"></div>
<div class="abs" style="left:7px;top:479px;width:38px;height:38px;background:radial-gradient(circle at 50% 60%,#ec7a58 0%,#f0937a 40%,#f6b7a3 100%);border:1px solid #aaa;box-shadow:0 0 0 1px #f6f6f6 inset"></div>
<svg style="left:25px;top:498px" width="39" height="39" viewBox="0 0 39 39"><rect x="0.5" y="0.5" width="38" height="38" fill="#fff" stroke="#8d8d8d"/><rect x="11.5" y="11.5" width="16" height="16" fill="#ccc" stroke="#777"/><path d="M1 38 L38 1" stroke="#ff1414" stroke-width="2"/></svg>
<svg style="left:53px;top:480px" width="14" height="14" viewBox="0 0 14 14"><path d="M3.5 3.5 C8 3 10.5 5 10.5 9.5" fill="none" stroke="#444" stroke-width="1.6"/><path d="M1 3.5 L5 0.5 V6.5 Z M10.5 13 L7.5 9 H13.5 Z" fill="#444"/></svg>
<svg style="left:7px;top:523px" width="13" height="13" viewBox="0 0 13 13"><rect x="4.5" y="4.5" width="7.5" height="7.5" fill="#fff" stroke="#222" stroke-width="1.6"/><rect x="1" y="1" width="7.5" height="7.5" fill="#fff" stroke="#222" stroke-width="1.6"/></svg>
<div class="abs" style="left:49.5px;top:544.5px;width:19px;height:20px;background:#c9c9c9"></div>
<svg style="left:9px;top:548px" width="14" height="14" viewBox="0 0 14 14"><rect x="1.5" y="1.5" width="11" height="11" fill="#fff" stroke="#111" stroke-width="3"/></svg>
<svg style="left:31px;top:548px" width="14" height="14" viewBox="0 0 14 14"><defs><linearGradient id="tg2"><stop offset="0" stop-color="#fff"/><stop offset="1" stop-color="#333"/></linearGradient></defs><rect x="0.5" y="0.5" width="13" height="13" fill="url(#tg2)" stroke="#333"/></svg>
<svg style="left:52.5px;top:548px" width="14" height="14" viewBox="0 0 14 14"><rect x="0.5" y="0.5" width="13" height="13" fill="#fff" stroke="#333"/><path d="M1 13 L13 1" stroke="#ff1414" stroke-width="2.4"/></svg>
<div class="abs" style="left:6px;top:571px;width:21px;height:19px;background:#c6c6c6"></div>
<div class="abs" style="left:6px;top:571px;width:62px;height:19px;border:1px solid #e4e4e4"></div>
<svg style="left:9.5px;top:574px" width="13" height="13" viewBox="0 0 13 13"><circle cx="5.5" cy="5.5" r="4.6" fill="#dcdcdc" stroke="#484848" stroke-width="1.1"/><rect x="6.5" y="6.5" width="5.5" height="5.5" fill="#484848"/></svg>
<svg style="left:31.5px;top:574px" width="13" height="13" viewBox="0 0 13 13"><circle cx="5.5" cy="5.5" r="4.6" fill="#dcdcdc" stroke="#484848" stroke-width="1.1"/><rect x="6.5" y="6.5" width="5.5" height="5.5" fill="#484848"/></svg>
<svg style="left:53.0px;top:574px" width="13" height="13" viewBox="0 0 13 13"><circle cx="5.5" cy="5.5" r="4.6" fill="#f4f4f4" stroke="#c8c8c8" stroke-width="1.1"/><rect x="6.5" y="6.5" width="5.5" height="5.5" fill="#c8c8c8"/></svg>
<svg style="left:27px;top:599px" width="23" height="18" viewBox="0 0 23 18"><rect x="8.5" y="1" width="14" height="10" fill="#d0d0d0" stroke="#555" stroke-width="1.2"/><rect x="8.5" y="1" width="14" height="2.5" fill="#555"/><rect x="0.7" y="6" width="13" height="10.5" fill="#d0d0d0" stroke="#555" stroke-width="1.2"/><rect x="0.7" y="6" width="13" height="2.5" fill="#555"/></svg>
<div class="t" style="left:30px;top:634px;font-size:13px;color:#444;letter-spacing:0.5px;font-weight:bold">•••</div>

<!-- STATUS -->
<div id="statusbar" class="abs"></div>
<div class="abs" style="left:83px;top:1047.5px;width:54px;height:14px;background:#fff;border:1px solid #e6e6e6"></div>
<div class="t" style="left:86px;top:1052px;font-size:12.5px;color:#444;">87.36%</div>
<div class="abs" style="left:137px;top:1047.5px;width:20px;height:14px;background:#f5f5f5;border:1px solid #e2e2e2"></div>
<svg style="left:142.5px;top:1055.8px" width="8" height="5" viewBox="0 0 8 5"><path d="M0.7 0.7 L4.0 4.5 L7.3 0.7" fill="none" stroke="#444" stroke-width="1.2" stroke-linecap="round" stroke-linejoin="round"/></svg>
<div class="abs" style="left:162px;top:1047.5px;width:53px;height:14px;background:#fff;border:1px solid #e6e6e6"></div>
<div class="t" style="left:165px;top:1052px;font-size:12.5px;color:#444;">0°</div>
<div class="abs" style="left:215px;top:1047.5px;width:20px;height:14px;background:#f5f5f5;border:1px solid #e2e2e2"></div>
<svg style="left:221.0px;top:1055.8px" width="8" height="5" viewBox="0 0 8 5"><path d="M0.7 0.7 L4.0 4.5 L7.3 0.7" fill="none" stroke="#444" stroke-width="1.2" stroke-linecap="round" stroke-linejoin="round"/></svg>
<svg style="left:244px;top:1052.5px" width="9" height="9" viewBox="0 0 9 9"><path d="M0.8 0 V9" stroke="#222" stroke-width="1.6"/><path d="M8.5 0 V9 L2.5 4.5 Z" fill="#222"/></svg>
<svg style="left:264px;top:1052.5px" width="6" height="9" viewBox="0 0 6 9"><path d="M6 0 V9 L0 4.5 Z" fill="#222"/></svg>
<div class="abs" style="left:280px;top:1047.5px;width:43.5px;height:14px;background:#fff;border:1px solid #e6e6e6"></div>
<div class="t" style="left:283px;top:1052px;font-size:12.5px;color:#444;">2</div>
<div class="abs" style="left:323.5px;top:1047.5px;width:18.5px;height:14px;background:#f5f5f5;border:1px solid #e2e2e2"></div>
<svg style="left:328.5px;top:1055.8px" width="8" height="5" viewBox="0 0 8 5"><path d="M0.7 0.7 L4.0 4.5 L7.3 0.7" fill="none" stroke="#444" stroke-width="1.2" stroke-linecap="round" stroke-linejoin="round"/></svg>
<svg style="left:352px;top:1052.5px" width="6" height="9" viewBox="0 0 6 9"><path d="M0 0 V9 L6 4.5 Z" fill="#c4c4c4"/></svg>
<svg style="left:368px;top:1052.5px" width="9" height="9" viewBox="0 0 9 9"><path d="M8.2 0 V9" stroke="#c4c4c4" stroke-width="1.6"/><path d="M0.5 0 V9 L6.5 4.5 Z" fill="#c4c4c4"/></svg>
<div class="abs" style="left:388.5px;top:1047.5px;width:212px;height:12px;background:#dadada"></div>
<div class="t" style="left:415px;top:1053px;font-size:10.9px;color:#555;">ダイレクト選択ツールを切り換え</div>
<svg style="left:609px;top:1052.5px" width="6" height="9" viewBox="0 0 6 9"><path d="M0 0 V9 L6 4.5 Z" fill="#222"/></svg>
<div class="abs" style="left:622px;top:1047.5px;width:970px;height:12px;background:#fcfcfc"></div>
<svg style="left:627.5px;top:1052px" width="5" height="8" viewBox="0 0 5 8"><path d="M4.2 0.5 L0.8 4 L4.2 7.5" fill="none" stroke="#8a8a8a" stroke-width="1.1"/></svg>
<svg style="left:1581px;top:1052px" width="5" height="8" viewBox="0 0 5 8"><path d="M0.8 0.5 L4.2 4 L0.8 7.5" fill="none" stroke="#8a8a8a" stroke-width="1.1"/></svg>
<div class="abs" style="left:1105px;top:1049.5px;width:27px;height:12px;background:#dadada;border-radius:7px 7px 0 0"></div>
<div class="abs" style="left:1592px;top:1047px;width:17.5px;height:12px;background:#d2d2d2"></div>

<!-- DOCK -->
<div id="dock" class="abs"></div>
<div id="dockstrip" class="abs"></div>
<div class="abs" style="left:1610px;top:76px;width:310px;height:13px;background:#dadada"></div>
<div class="t" style="left:1640px;top:76px;font-size:12px;color:#555;letter-spacing:-1px">‹‹</div>
<div class="t" style="left:1909px;top:76px;font-size:12px;color:#555;letter-spacing:-1px">››</div>
<div class="sep" style="left:1613px;top:132.1px;width:40px;height:1.5px;background:#d9d9d9"></div>
<div class="sep" style="left:1613px;top:236.1px;width:40px;height:1.5px;background:#d9d9d9"></div>
<div class="sep" style="left:1613px;top:340.3px;width:40px;height:1.5px;background:#d9d9d9"></div>
<div class="sep" style="left:1613px;top:414.3px;width:40px;height:1.5px;background:#d9d9d9"></div>
<div class="sep" style="left:1613px;top:488.7px;width:40px;height:1.5px;background:#d9d9d9"></div>
<div class="sep" style="left:1613px;top:532.8px;width:40px;height:1.5px;background:#d9d9d9"></div>
<div class="sep" style="left:1613px;top:606.6px;width:40px;height:1.5px;background:#d9d9d9"></div>
<div class="grip" style="left:1622px;top:92.7px;width:21px;height:4px"></div>
<div class="grip" style="left:1622px;top:137.0px;width:21px;height:4px"></div>
<div class="grip" style="left:1622px;top:241.5px;width:21px;height:4px"></div>
<div class="grip" style="left:1622px;top:345.4px;width:21px;height:4px"></div>
<div class="grip" style="left:1622px;top:419.6px;width:21px;height:4px"></div>
<div class="grip" style="left:1622px;top:493.7px;width:21px;height:4px"></div>
<div class="grip" style="left:1622px;top:537.8px;width:21px;height:4px"></div>
<svg style="left:1622.0px;top:103.6px" width="22" height="22" viewBox="0 0 22 22"><defs><linearGradient id="dg1" x1="0" x2="1"><stop offset="0" stop-color="#222"/><stop offset="1" stop-color="#d8d8d8"/></linearGradient></defs><path d="M3 2 C12 3 18 9 20 19 H3 Z" fill="url(#dg1)" stroke="#444" stroke-width="1"/></svg>
<svg style="left:1622.0px;top:148.5px" width="22" height="22" viewBox="0 0 22 22"><g><rect x="2" y="5" width="18" height="12" fill="#8a8a8a"/><g fill="#3c3c3c"><rect x="2" y="5" width="5.3" height="5.3"/><rect x="14.7" y="5" width="5.3" height="5.3"/><rect x="8.3" y="11.7" width="5.3" height="5.3"/></g><path d="M2 11 H20 M7.8 5 V17 M14.2 5 V17" stroke="#f0f0f0" stroke-width="1"/></g></svg>
<svg style="left:1622.0px;top:178.4px" width="22" height="22" viewBox="0 0 22 22"><path d="M6 13 H16 V20.5 H6 Z" fill="#3c3c3c"/><path d="M8 13 L6.5 8 L4 6.5 C4 4.5 6 3.5 6.5 5.5 L8.5 7 L10 13 M11 13 V5.5 C10 4 10.5 1.5 11.5 0.5 C12.5 1.5 13 4 12 5.5 V13 M13.5 13 L15 8 C14.5 6 16 4 18.5 4 C18.5 6 18 7.5 16.5 8.5 L15 13" fill="#3c3c3c" stroke="#3c3c3c" stroke-width="0.8"/></svg>
<svg style="left:1622.0px;top:208.3px" width="22" height="22" viewBox="0 0 22 22"><circle cx="11" cy="6.5" r="4.3" fill="#3c3c3c"/><circle cx="6" cy="12.5" r="4.3" fill="#3c3c3c"/><circle cx="16" cy="12.5" r="4.3" fill="#3c3c3c"/><path d="M11 9 C11 15 10 18 7.5 20 H14.5 C12 18 11 15 11 9 Z" fill="#3c3c3c"/></svg>
<svg style="left:1622.0px;top:252.0px" width="22" height="22" viewBox="0 0 22 22"><path d="M2 4.5 H20" stroke="#3c3c3c" stroke-width="1"/><path d="M2 10 H20" stroke="#3c3c3c" stroke-width="2"/><path d="M2 16.5 H20" stroke="#3c3c3c" stroke-width="3.4"/></svg>
<svg style="left:1622.0px;top:281.8px" width="22" height="22" viewBox="0 0 22 22"><defs><linearGradient id="dg2" x1="0" x2="1"><stop offset="0" stop-color="#2a2a2a"/><stop offset="1" stop-color="#ececec"/></linearGradient></defs><rect x="2" y="4.5" width="18" height="13" fill="url(#dg2)" stroke="#444" stroke-width="1"/></svg>
<svg style="left:1622.0px;top:313.0px" width="22" height="22" viewBox="0 0 22 22"><defs><linearGradient id="dg3" x1="0" x2="1" y1="0" y2="1"><stop offset="0" stop-color="#777"/><stop offset="1" stop-color="#e4e4e4"/></linearGradient></defs><circle cx="8.5" cy="8.5" r="6.8" fill="#3c3c3c"/><circle cx="13.5" cy="13.5" r="6.8" fill="url(#dg3)" stroke="#3c3c3c" stroke-width="1"/></svg>
<svg style="left:1622.0px;top:356.3px" width="22" height="22" viewBox="0 0 22 22"><circle cx="11" cy="11" r="9" fill="none" stroke="#3c3c3c" stroke-width="1.2" stroke-dasharray="1.6 1.6"/><circle cx="11" cy="11" r="6.6" fill="#3c3c3c"/></svg>
<svg style="left:1622.0px;top:386.7px" width="22" height="22" viewBox="0 0 22 22"><rect x="6" y="3" width="14" height="14" fill="none" stroke="#3c3c3c" stroke-width="1.3"/><rect x="2" y="11" width="8" height="8" fill="#f0f0f0" stroke="#3c3c3c" stroke-width="1.3"/><rect x="4.5" y="13.5" width="4" height="4" fill="#3c3c3c"/></svg>
<svg style="left:1622.0px;top:429.8px" width="22" height="22" viewBox="0 0 22 22"><path d="M9 3.5 H2.5 V19.5 H18.5 V13" fill="none" stroke="#3c3c3c" stroke-width="1.6"/><path d="M9.5 12.5 L19 3 M12.5 2.5 H19.5 V9.5" fill="none" stroke="#3c3c3c" stroke-width="1.6"/></svg>
<svg style="left:1622.0px;top:459.7px" width="22" height="22" viewBox="0 0 22 22"><rect x="2" y="2" width="11" height="11" fill="none" stroke="#3c3c3c" stroke-width="1.4"/><rect x="7" y="9" width="13" height="10.5" fill="#f0f0f0" stroke="#3c3c3c" stroke-width="1.4"/></svg>
<div class="t" style="left:1623px;top:505px;font-size:21px;color:#3c3c3c">A</div><div class="abs" style="left:1640px;top:506px;width:1.3px;height:20px;background:#3c3c3c"></div>
<svg style="left:1622.0px;top:549.0px" width="22" height="22" viewBox="0 0 22 22"><path d="M9.5 11 A4.5 4.5 0 0 1 9.5 2 H17 V3.6 H15.5 V20 H13.8 V3.6 H12 V20 H10.3 V11 Z" fill="#3c3c3c"/></svg>
<div class="t" style="left:1624px;top:578px;font-size:25px;color:#3c3c3c;font-family:'Liberation Serif',serif;font-style:italic;font-weight:bold">O</div>

<div class="abs" style="left:1653px;top:89px;width:2px;height:970px;background:#d6d6d6"></div>
<div class="panel" style="left:1655px;top:89px;width:265px;height:213px"></div>
<div class="abs" style="left:1715px;top:89px;width:205px;height:28px;background:#dcdcdc"></div>
<svg style="left:1660px;top:99px" width="6" height="10" viewBox="0 0 6 10"><path d="M0.8 3.5 L3 1 L5.2 3.5 M0.8 6.5 L3 9 L5.2 6.5" fill="none" stroke="#aaa" stroke-width="1"/></svg>
<div class="t" style="left:1672px;top:98px;font-size:12.5px;color:#444;">カラー</div>
<svg style="left:1906px;top:100px" width="12" height="9" viewBox="0 0 12 9"><path d="M0 1H12M0 4.5H12M0 8H12" stroke="#666" stroke-width="1.3"/></svg>
<svg style="left:1662px;top:126.3px" width="10.5" height="10.5" viewBox="0 0 12 12"><rect x="4.2" y="4.2" width="7" height="7" fill="#fff" stroke="#111" stroke-width="1.5"/><rect x="0.8" y="0.8" width="7" height="7" fill="#fff" stroke="#111" stroke-width="1.5"/></svg>
<svg style="left:1684px;top:126.3px" width="11" height="11" viewBox="0 0 12 12"><path d="M3 3 C7 2.5 9 4.5 9 8.5" fill="none" stroke="#333" stroke-width="1.5"/><path d="M0.5 3 L4 0.3 V5.7 Z M9 12 L6.3 8.3 H11.7 Z" fill="#333"/></svg>
<div class="abs" style="left:1661px;top:144.5px;width:21.5px;height:21px;background:radial-gradient(circle at 50% 60%,#ec7a58 0%,#f0937a 45%,#f5b09b 100%);border:1px solid #9a9a9a;box-shadow:0 0 0 1px #f6f6f6 inset"></div>
<svg style="left:1671.5px;top:155px" width="22" height="21" viewBox="0 0 22 21"><rect x="0.5" y="0.5" width="21" height="20" fill="#fff" stroke="#777"/><rect x="7" y="6.5" width="8" height="8" fill="#ddd" stroke="#666"/><path d="M1 20 L21 1" stroke="#ff1414" stroke-width="1.6"/></svg>
<div class="t" style="left:1711px;top:131.8px;font-size:13px;color:#4a4a4a;">C</div>
<div class="abs" style="left:1730px;top:135.3px;width:122px;height:6px;border:1px solid #e2e2e2;background:#efefef;border-radius:1px"></div>
<div class="fld" style="left:1860px;top:127.8px;width:37px;height:21px;border-color:#e6e6e6"></div>
<div class="t" style="left:1900px;top:131.8px;font-size:13px;color:#4a4a4a;">%</div>
<div class="t" style="left:1709.5px;top:158.5px;font-size:13px;color:#4a4a4a;">M</div>
<div class="abs" style="left:1730px;top:162.0px;width:122px;height:6px;border:1px solid #e2e2e2;background:#efefef;border-radius:1px"></div>
<div class="fld" style="left:1860px;top:154.5px;width:37px;height:21px;border-color:#e6e6e6"></div>
<div class="t" style="left:1900px;top:158.5px;font-size:13px;color:#4a4a4a;">%</div>
<div class="t" style="left:1711.5px;top:185.5px;font-size:13px;color:#4a4a4a;">Y</div>
<div class="abs" style="left:1730px;top:189.0px;width:122px;height:6px;border:1px solid #e2e2e2;background:#efefef;border-radius:1px"></div>
<div class="fld" style="left:1860px;top:181.5px;width:37px;height:21px;border-color:#e6e6e6"></div>
<div class="t" style="left:1900px;top:185.5px;font-size:13px;color:#4a4a4a;">%</div>
<div class="t" style="left:1711.5px;top:212.3px;font-size:13px;color:#4a4a4a;">K</div>
<div class="abs" style="left:1730px;top:215.8px;width:122px;height:6px;border:1px solid #e2e2e2;background:#efefef;border-radius:1px"></div>
<div class="fld" style="left:1860px;top:208.3px;width:37px;height:21px;border-color:#e6e6e6"></div>
<div class="t" style="left:1900px;top:212.3px;font-size:13px;color:#4a4a4a;">%</div>
<svg style="left:1667px;top:217px" width="13" height="13" viewBox="0 0 13 13"><path d="M5 12 H11 V9.5 H7.5 V5.5 H10.5 L6.2 0.8 L2 5.5 H5 Z" fill="#333"/></svg>
<div class="abs" style="left:1686.7px;top:216.8px;width:14.7px;height:15px;background:#000;border:1.5px solid #999;outline:1px solid #e8e8e8"></div>
<svg style="left:1661px;top:241px" width="43" height="15" viewBox="0 0 43 15"><rect x="0.5" y="0.5" width="42" height="14" fill="#fff" stroke="#aaa"/><rect x="14" y="0.5" width="14" height="14" fill="#0a0606"/><path d="M1 14 L13.5 1" stroke="#ff1414" stroke-width="1.5"/></svg>
<div class="abs" style="left:1662px;top:267px;width:243.5px;height:26px;border:1.5px solid #7a7a7a;background:linear-gradient(to bottom,rgba(255,255,255,1) 0%,rgba(255,255,255,0) 45%,rgba(0,0,0,0) 55%,rgba(0,0,0,1) 100%),linear-gradient(to right,#e8141c 0%,#f6a31a 8%,#fff21a 16%,#8cc63a 27%,#14a04a 38%,#18a99a 47%,#1aa7e6 55%,#1b50a8 65%,#4a2a8c 74%,#9a2a8e 82%,#e6168a 91%,#e8141c 100%)"></div>
<div class="abs" style="left:1908.3px;top:285px;width:12px;height:16px;background:#333"></div>
<div class="abs" style="left:1655px;top:301px;width:265px;height:2px;background:#747474"></div>
<div class="panel" style="left:1655px;top:303px;width:265px;height:532px"></div>
<div class="abs" style="left:1733px;top:303px;width:187px;height:28.5px;background:#dcdcdc"></div>
<div class="abs" style="left:1733.5px;top:303px;width:98.5px;height:28.5px;background:#e3e3e3;border-right:1px solid #d6d6d6"></div>
<div class="t" style="left:1666px;top:311.5px;font-size:12px;color:#444;">プロパティ</div>
<div class="t" style="left:1742px;top:311.5px;font-size:12.1px;color:#6a6a6a;">CC ライブラリ</div>
<div class="t" style="left:1666px;top:345.7px;font-size:13.3px;color:#444;">選択なし</div>
<div class="sep" style="left:1655px;top:366.6px;width:257px;height:1.5px;background:#e2e2e2"></div>
<div class="sep" style="left:1655px;top:503.7px;width:257px;height:1.5px;background:#e2e2e2"></div>
<div class="sep" style="left:1655px;top:544.8px;width:257px;height:1.5px;background:#e2e2e2"></div>
<div class="sep" style="left:1655px;top:584.9px;width:257px;height:1.5px;background:#e2e2e2"></div>
<div class="sep" style="left:1655px;top:625.8px;width:257px;height:1.5px;background:#e2e2e2"></div>
<div class="sep" style="left:1655px;top:774.8px;width:257px;height:1.5px;background:#e2e2e2"></div>
<div class="t" style="left:1666px;top:382.2px;font-size:13.3px;color:#444;">ドキュメント</div>
<div class="t" style="left:1712.5px;top:411.2px;font-size:13.3px;color:#444;">単位 :</div>
<div class="fld" style="left:1752px;top:406px;width:150px;height:19.5px"></div>
<div class="t" style="left:1759px;top:411.2px;font-size:13.3px;color:#333;">ミリメートル</div>
<svg style="left:1889.0px;top:414.2px" width="8" height="5" viewBox="0 0 8 5"><path d="M0.7 0.7 L4.0 4.5 L7.3 0.7" fill="none" stroke="#444" stroke-width="1.2" stroke-linecap="round" stroke-linejoin="round"/></svg>
<div class="t" style="left:1663px;top:442.2px;font-size:13.3px;color:#444;">アートボード :</div>
<div class="fld" style="left:1752px;top:436.5px;width:59px;height:20.5px"></div>
<div class="t" style="left:1756px;top:440px;font-size:13.5px;color:#333;">2</div>
<div class="btn" style="left:1811px;top:436.5px;width:20px;height:20.5px"></div>
<svg style="left:1817.0px;top:445.2px" width="8" height="5" viewBox="0 0 8 5"><path d="M0.7 0.7 L4.0 4.5 L7.3 0.7" fill="none" stroke="#444" stroke-width="1.2" stroke-linecap="round" stroke-linejoin="round"/></svg>
<svg style="left:1846px;top:443.5px" width="6" height="9" viewBox="0 0 6 9"><path d="M6 0 V9 L0 4.5 Z" fill="#222"/></svg>
<svg style="left:1868.5px;top:443.5px" width="6" height="9" viewBox="0 0 6 9"><path d="M0 0 V9 L6 4.5 Z" fill="#c4c4c4"/></svg>
<div class="pbtn" style="left:1751.5px;top:467.5px;width:144.5px;height:21px;font-size:13px;line-height:20px;color:#444">アートボードを編集</div>
<div class="t" style="left:1666px;top:519.2px;font-size:13.3px;color:#444;">定規とグリッド</div>
<svg style="left:1773px;top:516px" width="18" height="18" viewBox="0 0 18 18"><path d="M1 1 H17.5 V5 H5 V17.5 H1 Z" fill="#444"/><path d="M7 2.5 V4 M9.5 2.5 V4 M12 2.5 V4 M14.5 2.5 V4 M2.5 7 H4 M2.5 9.5 H4 M2.5 12 H4 M2.5 14.5 H4" stroke="#eee" stroke-width="1"/></svg>
<svg style="left:1806px;top:516px" width="18" height="18" viewBox="0 0 18 18"><path d="M0.5 0.5 H17.5 V17.5 H0.5 Z M6.2 0.5 V17.5 M11.8 0.5 V17.5 M0.5 6.2 H17.5 M0.5 11.8 H17.5" fill="none" stroke="#c9c9c9" stroke-width="1"/></svg>
<svg style="left:1838px;top:516px" width="18" height="18" viewBox="0 0 18 18"><defs><pattern id="chk" width="4" height="4" patternUnits="userSpaceOnUse"><rect width="2" height="2" fill="#dedede"/><rect x="2" y="2" width="2" height="2" fill="#dedede"/></pattern></defs><rect x="0.5" y="0.5" width="17" height="17" fill="url(#chk)" stroke="#d6d6d6"/></svg>
<div class="t" style="left:1666px;top:560.2px;font-size:13.3px;color:#444;">ガイド</div>
<svg style="left:1761px;top:556px" width="18" height="18" viewBox="0 0 18 18"><path d="M5.5 1 V17 M10.5 1 V17 M1 7 H17 M1 12 H17" stroke="#d0d0d0" stroke-width="1.2"/></svg>
<div class="abs" style="left:1789.5px;top:553px;width:26px;height:25.5px;border:1px solid #b8b8b8;border-radius:2px;background:#ececec"></div>
<svg style="left:1794px;top:557px" width="18" height="18" viewBox="0 0 18 18"><path d="M4.5 1 V17 M9 1 V17 M1 6.5 H17 M1 11.5 H10" stroke="#c6c6c6" stroke-width="1.2"/><rect x="10.5" y="11.5" width="7" height="5.5" fill="#c2c2c2"/><path d="M12 11.5 V10 A2 2 0 0 1 16 10 V11.5" fill="none" stroke="#c2c2c2" stroke-width="1.2"/></svg>
<div class="abs" style="left:1822px;top:553px;width:26px;height:25.5px;border-radius:2px;background:#bdbdbd"></div>
<svg style="left:1826px;top:557px" width="18" height="18" viewBox="0 0 18 18"><path d="M5.5 1 V17 M1 6 H17 M2 2.5 L5.5 6 L2 9.5" fill="none" stroke="#333" stroke-width="1.3"/><path d="M14 8 L10.5 12.5 H13 L11.5 17 L16.5 11.5 H13.7 L15.5 8 Z" fill="#333"/></svg>
<div class="t" style="left:1666px;top:601.2px;font-size:13.3px;color:#444;">スナップオプション</div>
<div class="abs" style="left:1796px;top:593.5px;width:26px;height:26px;border-radius:2px;background:#bdbdbd"></div>
<svg style="left:1799px;top:597px" width="20" height="18" viewBox="0 0 20 18"><path d="M4 0.5 V17.5" stroke="#333" stroke-width="1.3"/><circle cx="4" cy="9" r="1.8" fill="#333"/><path d="M9 5.5 H13 A3.5 3.5 0 0 1 13 12.5 H9" fill="none" stroke="#333" stroke-width="2.2"/></svg>
<svg style="left:1831px;top:597px" width="20" height="18" viewBox="0 0 20 18"><path d="M1.5 0.5 V17.5 M5.5 0.5 V17.5 M0 3 H7 M0 6 H7 M0 9 H7 M0 12 H7 M0 15 H7" stroke="#333" stroke-width="1"/><path d="M9 5.5 H14 A3.5 3.5 0 0 1 14 12.5 H9" fill="none" stroke="#333" stroke-width="2.2"/></svg>
<svg style="left:1864px;top:597px" width="20" height="18" viewBox="0 0 20 18"><g fill="#333"><rect x="0" y="1" width="4.5" height="4.5"/><rect x="0" y="6.8" width="4.5" height="4.5"/><rect x="0" y="12.6" width="4.5" height="4.5"/></g><path d="M8 5.5 H13 A3.5 3.5 0 0 1 13 12.5 H8" fill="none" stroke="#333" stroke-width="2.2"/></svg>
<div class="t" style="left:1666px;top:639.7px;font-size:13.3px;color:#444;">環境設定</div>
<div class="t" style="left:1670px;top:666.2px;font-size:13.3px;color:#444;">キー入力 :</div>
<div class="fld" style="left:1734px;top:661px;width:63.5px;height:21px;overflow:hidden"><div class="t" style="left:3px;top:2.5px;font-size:13.2px;color:#333">0.3528 mm</div></div>
<div class="cb" style="left:1669.3px;top:694.8px"></div>
<div class="t" style="left:1686px;top:695.6999999999999px;font-size:13.2px;color:#444;">プレビュー境界を使用</div>
<div class="cb" style="left:1669.3px;top:720.5px"></div>
<div class="t" style="left:1686px;top:721.4px;font-size:13.2px;color:#444;">角を拡大・縮小</div>
<div class="cb" style="left:1669.3px;top:746.1px"></div>
<div class="t" style="left:1686px;top:747.0px;font-size:13.2px;color:#444;">線幅と効果を拡大・縮小</div>
<div class="t" style="left:1666px;top:794.2px;font-size:13.3px;color:#444;">クイック操作</div>
<div class="abs" style="left:1655px;top:812px;width:265px;height:22.5px;overflow:hidden"><div class="pbtn" style="left:11px;top:6.5px;width:250px;height:22px;font-size:13.2px;line-height:19px;color:#444">ドキュメント設定</div></div>
<div class="abs" style="left:1912.5px;top:331.5px;width:7.5px;height:503px;background:#ececec"></div>
<div class="abs" style="left:1913px;top:347px;width:7px;height:429px;background:#d2d2d2;border-radius:3px 0 0 3px"></div>
<svg style="left:1913px;top:336.5px" width="7" height="5" viewBox="0 0 7 5"><path d="M0.5 4.5 L3.5 1 L6.5 4.5" fill="none" stroke="#888" stroke-width="1"/></svg>
<div class="abs" style="left:1908.3px;top:817.5px;width:12px;height:17px;background:#333"></div>
<div class="abs" style="left:1655px;top:834px;width:265px;height:2px;background:#747474"></div>
<div class="panel" style="left:1655px;top:836px;width:265px;height:223px"></div>
<div class="abs" style="left:1721px;top:836px;width:199px;height:29px;background:#dcdcdc"></div>
<div class="t" style="left:1666px;top:845px;font-size:12.5px;color:#444;">レイヤー</div>
<svg style="left:1906px;top:847px" width="12" height="9" viewBox="0 0 12 9"><path d="M0 1H12M0 4.5H12M0 8H12" stroke="#666" stroke-width="1.3"/></svg>
<div class="abs" style="left:1661.5px;top:868px;width:256.5px;height:173px;border:1px solid #dedede;background:#f0f0f0"></div>
<div class="abs" style="left:1661.5px;top:874.3px;width:256.5px;height:21.3px;background:#bdd0ee"></div>
<div class="abs" style="left:1684px;top:874.3px;width:1px;height:21.3px;background:#c9d8ee"></div>
<div class="abs" style="left:1878.5px;top:874.3px;width:1px;height:21.3px;background:#c9d8ee"></div>
<svg style="left:1665.5px;top:879.5px" width="14" height="10" viewBox="0 0 14 10"><path d="M0.5 5 C3 0.5 11 0.5 13.5 5 C11 9.5 3 9.5 0.5 5 Z" fill="none" stroke="#333" stroke-width="1.4"/><circle cx="7" cy="5" r="2.4" fill="#333"/></svg>
<div class="abs" style="left:1708px;top:874.3px;width:3.2px;height:21.3px;background:#3d6df2"></div>
<svg style="left:1719.5px;top:880.5px" width="6" height="9" viewBox="0 0 6 9"><path d="M1 0.8 L5 4.5 L1 8.2" fill="none" stroke="#444" stroke-width="1.2"/></svg>
<svg style="left:1739px;top:875.3px" width="20" height="19" viewBox="0 0 20 19"><rect x="0.7" y="0.7" width="18.6" height="17.6" fill="#fff" stroke="#222" stroke-width="1.4"/><path d="M3 4 H8 L5 14 H3 Z" fill="#4a8fd0"/><path d="M4 9 L8 7 L7 14 H4 Z" fill="#f3b27a" opacity="0.7"/><circle cx="13.5" cy="11.5" r="3.2" fill="#f57f17"/></svg>
<div class="t" style="left:1765px;top:879.7px;font-size:13.3px;color:#1a1a1a;">レイヤー 1</div>
<svg style="left:1885.5px;top:880px" width="10" height="10" viewBox="0 0 10 10"><circle cx="5" cy="5" r="3.9" fill="none" stroke="#333" stroke-width="1.1"/></svg>
<svg style="left:1910px;top:874.3px" width="7.5" height="7" viewBox="0 0 7.5 7"><path d="M0 0 H7.5 V7 Z" fill="#333"/></svg>
<div class="t" style="left:1662px;top:1046.7px;font-size:13.3px;color:#444;">1 レイヤー</div>
<svg style="left:1742.5px;top:1045px" width="13" height="13" viewBox="0 0 13 13"><path d="M5.5 2 H1 V12 H11 V8" fill="none" stroke="#444" stroke-width="1.3"/><path d="M6 7 L12 1 M8 0.8 H12.2 V5" fill="none" stroke="#444" stroke-width="1.3"/></svg>
<svg style="left:1770.5px;top:1045px" width="13" height="13" viewBox="0 0 13 13"><circle cx="5" cy="5" r="3.8" fill="none" stroke="#c8c8c8" stroke-width="1.2"/><path d="M8 8 L12 12" stroke="#c8c8c8" stroke-width="1.6"/></svg>
<svg style="left:1797.5px;top:1045px" width="13" height="13" viewBox="0 0 13 13"><rect x="0.6" y="0.6" width="9" height="9" fill="none" stroke="#444" stroke-width="1.2"/><rect x="3" y="3" width="6" height="6" fill="#444"/><rect x="6" y="6" width="6.4" height="6.4" fill="#f0f0f0" stroke="#444" stroke-width="1"/></svg>
<svg style="left:1824px;top:1045px" width="17" height="13" viewBox="0 0 17 13"><path d="M1 1 V5 H5 M3 3 L5 5 L3 7" fill="none" stroke="#444" stroke-width="1.2"/><rect x="7" y="2.5" width="9" height="9" fill="none" stroke="#444" stroke-width="1.2"/><path d="M11.5 4.5 V9.5 M9 7 H14" stroke="#444" stroke-width="1.2"/></svg>
<svg style="left:1855px;top:1045px" width="12" height="12" viewBox="0 0 12 12"><rect x="0.7" y="0.7" width="10.6" height="10.6" fill="none" stroke="#444" stroke-width="1.3"/><path d="M6 3 V9 M3 6 H9" stroke="#444" stroke-width="1.3"/></svg>
<svg style="left:1882.5px;top:1045px" width="11" height="13" viewBox="0 0 11 13"><path d="M0.5 2.5 H10.5 M3.5 2.5 V0.8 H7.5 V2.5 M1.5 2.5 L2.2 12.5 H8.8 L9.5 2.5 M4 5 V10.5 M5.5 5 V10.5 M7 5 V10.5" fill="none" stroke="#cfcfcf" stroke-width="1"/></svg>

<div class="abs" style="left:0;top:2px;width:1px;height:1057px;background:#bcbcbc"></div>
<svg style="left:0;top:1px" width="4" height="4" viewBox="0 0 4 4"><path d="M0 0H3.5L0 3.5Z" fill="#4a0f25"/></svg>
</div>
</body>
</html>
